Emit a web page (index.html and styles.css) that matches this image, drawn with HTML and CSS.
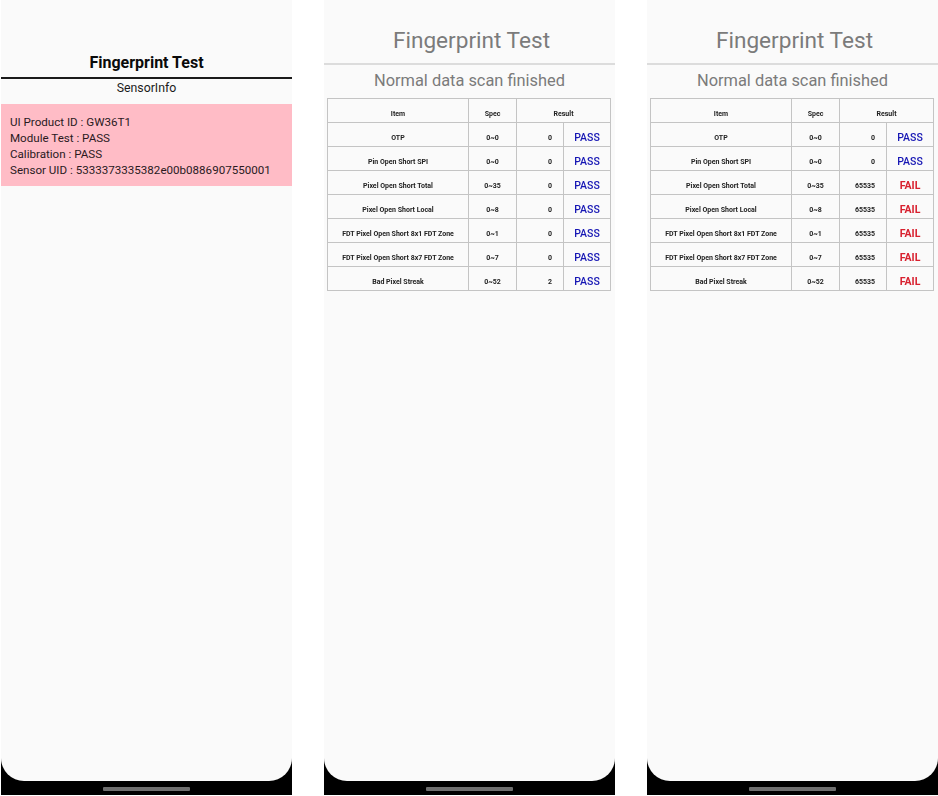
FILE: index.html
```html
<!DOCTYPE html>
<html lang="en">
<head>
<meta charset="utf-8">
<title>Fingerprint Test</title>
<link rel="stylesheet" href="styles.css">
</head>
<body>
<div class="gallery">
  <section class="phone">
    <div class="screen">
      <h1 class="title-bold">Fingerprint Test</h1>
      <h2 class="sub-small">SensorInfo</h2>
      <div class="info">
        <p>UI Product ID : GW36T1</p>
        <p>Module Test : PASS</p>
        <p>Calibration : PASS</p>
        <p>Sensor UID : 5333373335382e00b0886907550001</p>
      </div>
    </div>
    <div class="navbar"><span class="handle"></span></div>
  </section>

  <section class="phone">
    <div class="screen">
      <h1 class="title-light">Fingerprint Test</h1>
      <h2 class="sub-light">Normal data scan finished</h2>
      <table class="results">
        <colgroup><col class="c1"><col class="c2"><col class="c3"><col class="c4"></colgroup>
        <tr><td>Item</td><td>Spec</td><td colspan="2">Result</td></tr>
        <tr><td>OTP</td><td>0~0</td><td class="val">0</td><td class="pass">PASS</td></tr>
        <tr><td>Pin Open Short SPI</td><td>0~0</td><td class="val">0</td><td class="pass">PASS</td></tr>
        <tr><td>Pixel Open Short Total</td><td>0~35</td><td class="val">0</td><td class="pass">PASS</td></tr>
        <tr><td>Pixel Open Short Local</td><td>0~8</td><td class="val">0</td><td class="pass">PASS</td></tr>
        <tr><td>FDT Pixel Open Short 8x1 FDT Zone</td><td>0~1</td><td class="val">0</td><td class="pass">PASS</td></tr>
        <tr><td>FDT Pixel Open Short 8x7 FDT Zone</td><td>0~7</td><td class="val">0</td><td class="pass">PASS</td></tr>
        <tr><td>Bad Pixel Streak</td><td>0~52</td><td class="val">2</td><td class="pass">PASS</td></tr>
      </table>
    </div>
    <div class="navbar"><span class="handle"></span></div>
  </section>

  <section class="phone">
    <div class="screen">
      <h1 class="title-light">Fingerprint Test</h1>
      <h2 class="sub-light">Normal data scan finished</h2>
      <table class="results">
        <colgroup><col class="c1"><col class="c2"><col class="c3"><col class="c4"></colgroup>
        <tr><td>Item</td><td>Spec</td><td colspan="2">Result</td></tr>
        <tr><td>OTP</td><td>0~0</td><td class="val">0</td><td class="pass">PASS</td></tr>
        <tr><td>Pin Open Short SPI</td><td>0~0</td><td class="val">0</td><td class="pass">PASS</td></tr>
        <tr><td>Pixel Open Short Total</td><td>0~35</td><td class="val">65535</td><td class="fail">FAIL</td></tr>
        <tr><td>Pixel Open Short Local</td><td>0~8</td><td class="val">65535</td><td class="fail">FAIL</td></tr>
        <tr><td>FDT Pixel Open Short 8x1 FDT Zone</td><td>0~1</td><td class="val">65535</td><td class="fail">FAIL</td></tr>
        <tr><td>FDT Pixel Open Short 8x7 FDT Zone</td><td>0~7</td><td class="val">65535</td><td class="fail">FAIL</td></tr>
        <tr><td>Bad Pixel Streak</td><td>0~52</td><td class="val">65535</td><td class="fail">FAIL</td></tr>
      </table>
    </div>
    <div class="navbar"><span class="handle"></span></div>
  </section>
</div>
</body>
</html>
```
FILE: styles.css
```css
html, body {
  margin: 0;
  padding: 0;
  background: #ffffff;
  overflow: hidden;
}
body {
  font-family: Roboto, "Liberation Sans", sans-serif;
  color: #111111;
}
.gallery {
  display: flex;
  gap: 32px;
  padding-left: 1px;
  width: 938px;
  height: 796px;
  box-sizing: border-box;
}
.phone {
  flex: none;
  width: 291px;
  height: 795px;
  display: flex;
  flex-direction: column;
  background: #000000;
}
.screen {
  height: 781px;
  box-sizing: border-box;
  background: #fafafa;
  border-radius: 0 0 23px 23px;
  display: flex;
  flex-direction: column;
}
.navbar {
  flex: 1;
  display: flex;
  justify-content: center;
  align-items: center;
}
.handle {
  width: 87px;
  height: 4px;
  margin-top: 1px;
  background: #6f6f6f;
  border-radius: 1px;
}
h1, h2, p { margin: 0; font-weight: 400; }
.title-bold {
  margin-top: 52px;
  height: 25px;
  line-height: 21px;
  font-size: 16px;
  font-weight: 700;
  text-align: center;
  color: #0a0a0a;
  border-bottom: 2px solid #1a1a1a;
  box-sizing: content-box;
}
.sub-small {
  height: 25px;
  line-height: 19px;
  font-size: 12.3px;
  text-align: center;
  color: #1a1a1a;
}
.info {
  background: #ffbcc6;
  padding: 9.5px 9px 7px;
  font-size: 11.6px;
  line-height: 16.3px;
  white-space: nowrap;
  height: 82px;
  box-sizing: border-box;
  color: #2a1a1e;
}
.title-light {
  margin-top: 27px;
  height: 36px;
  line-height: 28px;
  font-size: 22.6px;
  text-align: center;
  padding-left: 4px;
  color: #7b7b7b;
  border-bottom: 2px solid #dcdcdc;
  box-sizing: content-box;
  width: 287px;
}
.sub-light {
  height: 33px;
  line-height: 31px;
  font-size: 16.4px;
  text-align: center;
  color: #7b7b7b;
}
.results {
  margin-left: 3px;
  width: 283px;
  table-layout: fixed;
  border-collapse: collapse;
  will-change: transform;
}
.c1 { width: 141px; }
.c2 { width: 48px; }
.c3 { width: 47px; }
.c4 { width: 47px; }
.results td {
  height: 24px;
  box-sizing: border-box;
  padding: 7.5px 0 0;
  border: 1px solid #c4c4c4;
  text-align: center;
  vertical-align: middle;
  font-size: 7px;
  font-weight: 700;
  line-height: 10px;
  color: #222222;
}
.results td.val { text-align: right; padding-right: 11px; }
.results td.pass,
.results td.fail {
  font-size: 10.5px;
  padding: 6px 0 0;
  font-weight: 500;
}
.results td.pass { color: #1616b4; }
.results td.fail { color: #d8202e; font-weight: 700; }
```
